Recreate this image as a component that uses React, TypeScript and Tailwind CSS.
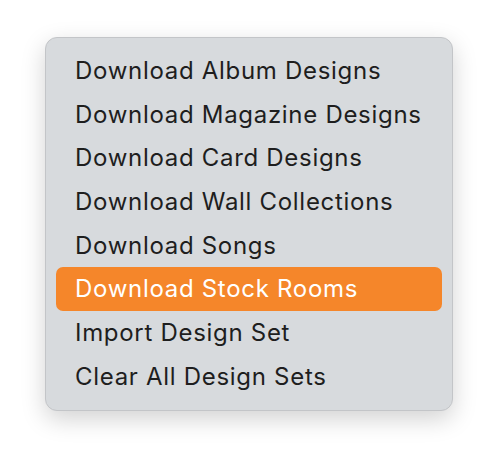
import React from 'react';

const items = [
    'Download Album Designs',
    'Download Magazine Designs',
    'Download Card Designs',
    'Download Wall Collections',
    'Download Songs',
    'Download Stock Rooms',
    'Import Design Set',
    'Clear All Design Sets',
];

const ACTIVE = 5;

export default function App() {
    return (
        <div className="w-[498px] h-[464px] bg-white pt-[37px] pl-[45px]" style={{ fontFamily: 'Inter, "Noto Sans", sans-serif' }}>
            {/* Context menu */}
            <div className="w-[408px] rounded-[12px] bg-[#d7dadd] border border-[#c3c5c8] py-[11px] px-[10px] shadow-[0_8px_24px_rgba(0,0,0,0.18)]">
                {items.map((label, i) => (
                    <div
                        key={label}
                        className={
                            i === ACTIVE
                                ? 'h-[43.7px] flex items-center px-[19px] rounded-[7px] bg-[#f5862a] text-white text-[24px] tracking-[0.7px]'
                                : 'h-[43.7px] flex items-center px-[19px] text-[#1e1e1e] text-[24px] tracking-[0.7px]'
                        }
                    >
                        {label}
                    </div>
                ))}
            </div>
        </div>
    );
}
